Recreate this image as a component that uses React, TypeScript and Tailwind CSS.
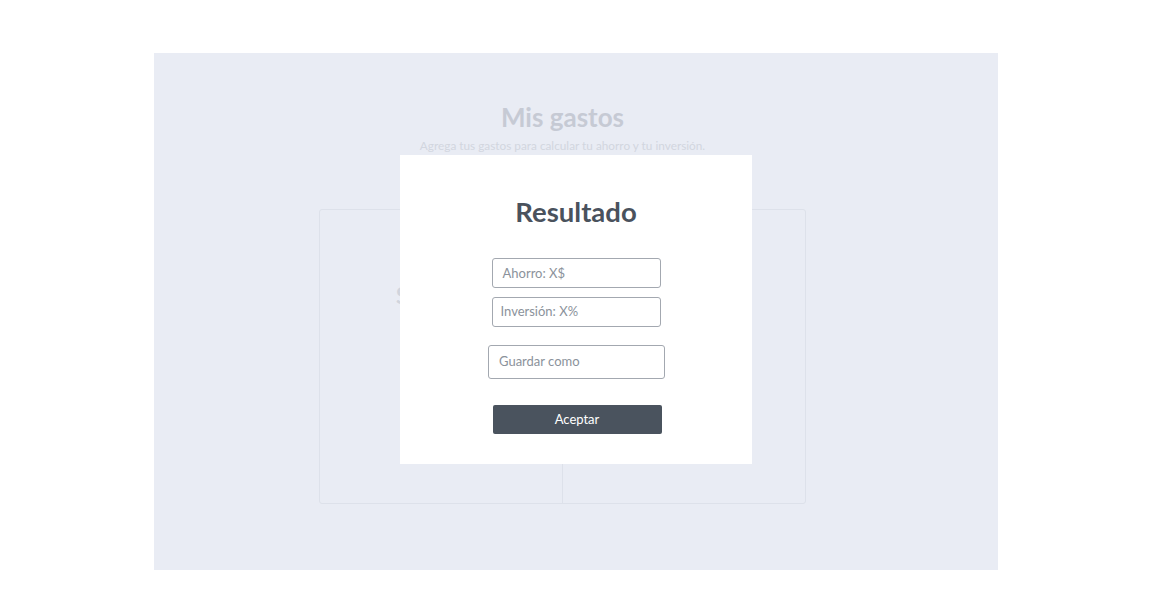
import React from "react";

export default function App() {
  return (
    <div className="w-full h-[607px] bg-white pt-[53px] pl-[154px]" style={{ fontFamily: "Lato, 'Open Sans', sans-serif" }}>
      <div className="relative w-[844px] h-[517px] bg-[#e9ecf4] flex flex-col items-center pr-[27px]">
        <h1 className="mt-[47px] text-[26px] leading-[34px] font-bold text-[#c6cad4]">Mis gastos</h1>
        <p className="mt-[4px] text-[11.8px] leading-[16px] text-[#d2d6df]">Agrega tus gastos para calcular tu ahorro y tu inversión.</p>
        <div className="mt-[55px] w-[487px] h-[295px] border border-[#dde1ea] rounded-[3px] flex">
          <div className="w-[243px] border-r border-[#dde1ea] pl-[76px] pt-[69px]">
            <span className="text-[22px] font-bold text-[#d0d4dd]">S</span>
          </div>
          <div className="flex-1" />
        </div>

        <div className="absolute left-[246px] top-[102px] w-[352px] h-[309px] bg-white flex flex-col items-center">
          <h2 className="mt-[40px] text-[27.5px] leading-[34px] font-bold text-[#4a525d]">Resultado</h2>
          <div className="mt-[29px] w-[169px] h-[30px] border border-[#a3a8b0] rounded-[3px] flex items-center pl-[10px] pt-[1px] text-[13px] text-[#8b929b]">
            Ahorro: X$
          </div>
          <div className="mt-[9px] w-[169px] h-[30px] border border-[#a3a8b0] rounded-[3px] flex items-center pl-[8px] text-[13px] text-[#8b929b]">
            Inversión: X%
          </div>
          <div className="mt-[18px] ml-[1px] w-[177px] h-[34px] border border-[#a3a8b0] rounded-[3px] flex items-center pl-[10px] text-[13px] text-[#8b929b]">
            Guardar como
          </div>
          <button className="mt-[26px] ml-[2px] w-[169px] h-[29px] bg-[#4a535e] rounded-[2px] text-white text-[13px]">
            Aceptar
          </button>
        </div>
      </div>
    </div>
  );
}
